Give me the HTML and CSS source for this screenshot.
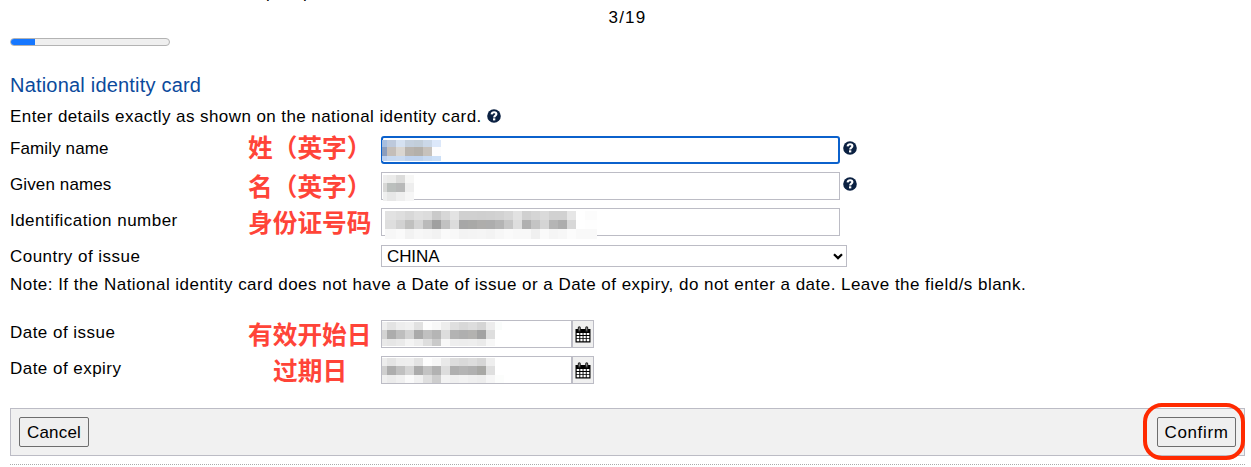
FILE: index.html
```html
<!DOCTYPE html>
<html lang="en">
<head>
<meta charset="utf-8">
<title>National identity card</title>
<link rel="stylesheet" href="styles.css">
</head>
<body>
<svg class="defs" aria-hidden="true">
  <symbol id="help" viewBox="0 0 14 14"><circle cx="7" cy="7" r="6.8" fill="#0b2142"/><path d="M4.600 5.300C4.800 3.800 5.700 3.200 7.100 3.200c1.400 0 2.300.8 2.300 1.900C9.400 6.700 7.200 6.500 7.200 8.400" fill="none" stroke="#fff" stroke-width="2.100"/><rect x="6" y="9.300" width="2.300" height="2.100" fill="#fff"/></symbol>
  <symbol id="calendar" viewBox="0 0 16 17"><path d="M.5 3h15v13.500H.5z" fill="#000"/><path d="M1.700 7h2.600v2.100H1.700zM5.300 7h2.300v2.100H5.300zM8.500 7h2.300v2.100H8.500zM11.700 7h2.600v2.100h-2.600zM1.700 10h2.600v2.200H1.700zM5.300 10h2.300v2.200H5.300zM8.500 10h2.300v2.200H8.500zM11.700 10h2.600v2.200h-2.600zM1.700 13.100h2.600v2.200H1.700zM5.300 13.100h2.300v2.200H5.300zM8.500 13.100h2.300v2.200H8.500zM11.700 13.100h2.600v2.200h-2.600z" fill="#fff"/><path d="M4.300 1.700v2.800M11.700 1.700v2.800" stroke="#222" stroke-width="3" stroke-linecap="round"/><path d="M4.300 1.500v3M11.700 1.500v3" stroke="#999" stroke-width="1"/></symbol>
</svg>
<main class="page">
  <div class="prev"><span>p</span><span>p</span></div>
  <div class="counter">3/19</div>
  <div class="progress"><div class="progress-fill"></div></div>
  <h1 class="title">National identity card</h1>
  <p class="intro"><span>Enter details exactly as shown on the national identity card.</span><svg class="help"><use href="#help"/></svg></p>
  <div class="row"><label class="tight">Family name</label><b class="note">姓（英字）</b><div class="field focus"><svg class="mosaic" data-mosaic="family"></svg></div><svg class="help"><use href="#help"/></svg></div>
  <div class="row"><label class="tight">Given names</label><b class="note low">名（英字）</b><div class="field"><svg class="mosaic" data-mosaic="given"></svg></div><svg class="help"><use href="#help"/></svg></div>
  <div class="row"><label>Identification number</label><b class="note low">身份证号码</b><div class="field"><svg class="mosaic" data-mosaic="number"></svg></div></div>
  <div class="row"><label>Country of issue</label><b class="note"></b><div class="select"><span>CHINA</span><svg class="chevron" viewBox="0 0 10 7"><path d="M1 1.200l4 3.900 4-3.900" fill="none" stroke="#000" stroke-width="2.200"/></svg></div></div>
  <p class="remark">Note: If the National identity card does not have a Date of issue or a Date of expiry, do not enter a date. Leave the field/s blank.</p>
  <div class="row"><label>Date of issue</label><b class="note date">有效开始日</b><div class="field short"><svg class="mosaic" data-mosaic="issue"></svg></div><button class="cal"><svg><use href="#calendar"/></svg></button></div>
  <div class="row"><label>Date of expiry</label><b class="note indent">过期日</b><div class="field short"><svg class="mosaic" data-mosaic="expiry"></svg></div><button class="cal"><svg><use href="#calendar"/></svg></button></div>
  <footer class="actions"><button class="btn cancel">Cancel</button><button class="btn confirm">Confirm<i class="ring"></i></button></footer>
  <div class="dots"></div>
</main>
<script src="mosaic.js"></script>
</body>
</html>
```
FILE: styles.css
```css
* { box-sizing: border-box; }
body { margin: 0; background: #fff; color: #000; font: 17px/20px "Liberation Sans", "Noto Sans CJK SC", sans-serif; letter-spacing: .47px; overflow: hidden; }
.defs { position: absolute; width: 0; height: 0; }
.page { display: flex; flex-direction: column; width: 1251px; height: 467px; padding-left: 10px; overflow: hidden; }
.prev { display: flex; gap: 27px; height: 7px; padding-left: 256px; line-height: 0; overflow: hidden; }
.prev span { margin-top: -7px; }
.counter { width: 1235px; height: 20px; padding-top: 1px; text-align: center; letter-spacing: 1.2px; }
.progress { width: 160px; height: 8px; margin-top: 11px; border: 1px solid #b3b3b3; border-radius: 4px; background: #efefef; overflow: hidden; }
.progress-fill { width: 25px; height: 8px; margin: -1px 0 0 -1px; background: #1677ff; }
.title { height: 24px; margin: 27px 0 0; font-size: 20px; line-height: 24px; font-weight: 400; letter-spacing: .2px; color: #0b4a9c; }
.intro { display: flex; align-items: center; gap: 5px; height: 20px; margin: 9px 0 10px; }
.intro span { padding-top: 2px; letter-spacing: .42px; }
.help { flex: none; width: 14px; height: 14px; }
.row { display: flex; align-items: center; height: 28px; margin-bottom: 8px; }
.row label { width: 238px; margin-top: -2px; white-space: nowrap; }
.row .tight { letter-spacing: .12px; }
.note { width: 133px; font: 700 24.700px/28px "Noto Sans CJK SC", sans-serif; letter-spacing: 0; color: #ff4438; white-space: nowrap; margin-top: -9px; }
.note.low { margin-top: -2px; }
.note.date, .note.indent { margin-top: -3px; }
.note.indent { padding-left: 25px; }
.field { position: relative; width: 459px; height: 28px; border: 1px solid #bcbcc5; background: #fff; }
.field.focus { border: 2px solid #0b61cc; border-radius: 3px; }
.field.short { width: 191px; }
.row .help { margin: -4px 0 0 3px; }
.mosaic { position: absolute; left: 0; top: 0; width: 240px; height: 30px; overflow: visible; }
.field .mosaic { left: -1px; top: -1px; }
.field.focus .mosaic { left: -2px; top: -2px; }
.select { display: flex; align-items: center; justify-content: space-between; width: 466px; height: 22px; padding: 0 3px 0 5px; border: 1px solid #bcbcc5; margin-top: -4px; letter-spacing: -.1px; }
.select span { padding-top: 2px; }
.chevron { width: 10px; height: 7px; }
.remark { height: 20px; margin: -5px 0 25px; white-space: nowrap; }
.cal { display: flex; align-items: center; justify-content: center; width: 22px; height: 28px; padding: 0 1px 0 0; border: 1px solid #bcbcc5; background: #f0f0f0; }
.cal svg { flex: none; width: 16px; height: 17px; }
.actions { display: flex; justify-content: space-between; align-items: center; width: 1235px; height: 48px; margin-top: 16px; padding: 0 8px; border: 1px solid #bcbcc5; background: #f1f1f1; }
.btn { position: relative; height: 30px; padding: 1px 0 0; border: 1px solid #6d6d6d; border-radius: 2px; background: #efefef; font: 17px/27px "Liberation Sans", sans-serif; letter-spacing: .2px; color: #000; }
.cancel { width: 70px; }
.confirm { width: 79px; letter-spacing: .65px; }
.ring { position: absolute; left: -15px; top: -15px; width: 102px; height: 57px; border: 4px solid #ff2a00; border-radius: 19px; }
.dots { width: 1235px; margin-top: 8px; border-top: 1px dotted #aaa; }
```
FILE: mosaic.js
```js
// Pixelated field contents: column edges and row edges are relative to the field's outer corner.
const mosaics = {
  family: { x: [1,6,15,24,33,42,51,60], y: [4,11,20,25], rows: [
    "#a8bfdf #bdc9dc #d5e1f1 #c4d0de #c2ceda #cbd8e8 #dce8fa",
    "#8c9ebd #c4beb9 #dad6d1 #b9b4ae #b4b0aa #c7c2bc #fcfcfd",
    "#bdd1ef #c6d9f2 #c9daf1 #bfd3ef #bfd3ee #c7daf2 #cbdff7"] },
  given: { x: [2,6,15,24,33], y: [3,11,20,29], rows: [
    "#eeeeee #ebebea #dcdcdb #f7f7f6","#d8d8d7 #bbbfbd #b8b9b9 #eeeeee","#efefef #e7e7e7 #efefef #f6f6f6"] },
  number: { x: [4,15,24,33,42,51,60,69,78,87,96,105,114,123,132,141,150,159,168,177,186,195,204,216], y: [3,12,21,31], rows: [
    "#e2e2e2 #dedede #d8d8d8 #dfdfdf #dcdcdc #cacaca #d7d7d7 #e3e3e3 #d0d0d0 #d0d0d0 #cfcfcf #d0d0d0 #d2d2d2 #d7d7d7 #e2e2e2 #d0d0d0 #d5d5d5 #dadada #d1d1d1 #d1d1d1 #e6e6e6 #ffffff #fcfcfc",
    "#dedede #d2d2d2 #c0c0bf #d4d4d4 #bababa #a0a0a0 #c1c1c1 #dcdcdc #a7a7a7 #a9a9a7 #aeadab #adadad #b4b4b4 #c6c6c6 #dedede #b0b0b0 #c4c4c4 #d5d5d5 #b5b5b5 #adadad #d8d8d8 #ffffff #fefefe",
    "#f7f7f7 #fafafa #f2f2f2 #f7f7f7 #f5f5f5 #f2f2f2 #fafafa #f8f8f8 #f3f3f3 #f4f4f4 #f5f5f5 #f3f3f3 #f7f7f7 #fafafa #f8f8f8 #f8f8f8 #f0f0f0 #fafafa #f5f5f5 #f7f7f7 #fcfcfc #f9f9f9 #f9f9f9"] },
  issue: { x: [1,6,15,24,33,42,51,60,69,78,87,96,105,114,121], y: [2,10,19,26], rows: [
    "#eeeeee #e3e3e3 #ededed #f0f0f0 #e1e1e1 #fdfdfd #f8f8f8 #ededed #dfdfdf #d8d8d8 #dddddd #d5d5d5 #ececec #fafcfb",
    "#d3d3d3 #acacac #bebebe #d2d2d2 #aaaaaa #c0c0c0 #b5b5b5 #dddddd #b3b3b3 #afafaf #b3b2b0 #a2a2a2 #dedede #ffffff",
    "#e9e9e9 #e6e6e6 #eaeaea #f4f4f4 #ededed #dedede #cacaca #f8f8f8 #eeeeee #ededed #eeeeee #eaeaea #f7f7f7 #ffffff"] },
  expiry: { x: [1,6,15,24,33,42,51,60,69,78,87,96,105,114,123], y: [2,10,19,27], rows: [
    "#ededed #e4e4e4 #ededed #eeeeee #e3e3e3 #fdfdfd #f7f7f7 #e9e9e9 #dddddd #d9d9d9 #dddddd #d6d6d6 #eeeeee #ffffff",
    "#cfcfcf #adadad #c0c0c0 #d4d4d4 #ababab #c3c3c3 #b2b2b2 #dddddd #afafaf #b4b4b4 #b0b0b0 #a8a8a5 #dfdfdf #ffffff",
    "#f0f0f0 #ebebeb #f0f0f0 #fafafa #f1f1f1 #dfdfdf #cdcdcd #f3f3f3 #efefef #f2f2f2 #efefef #ededed #f6f6f6 #fcfdfc"] }
};
for (const svg of document.querySelectorAll("[data-mosaic]")) {
  const m = mosaics[svg.dataset.mosaic];
  m.rows.forEach((row, r) => row.split(" ").forEach((color, c) => {
    const rect = document.createElementNS("http://www.w3.org/2000/svg", "rect");
    rect.setAttribute("x", m.x[c]);
    rect.setAttribute("y", m.y[r]);
    rect.setAttribute("width", m.x[c + 1] - m.x[c]);
    rect.setAttribute("height", m.y[r + 1] - m.y[r]);
    rect.setAttribute("fill", color);
    svg.append(rect);
  }));
}
```
